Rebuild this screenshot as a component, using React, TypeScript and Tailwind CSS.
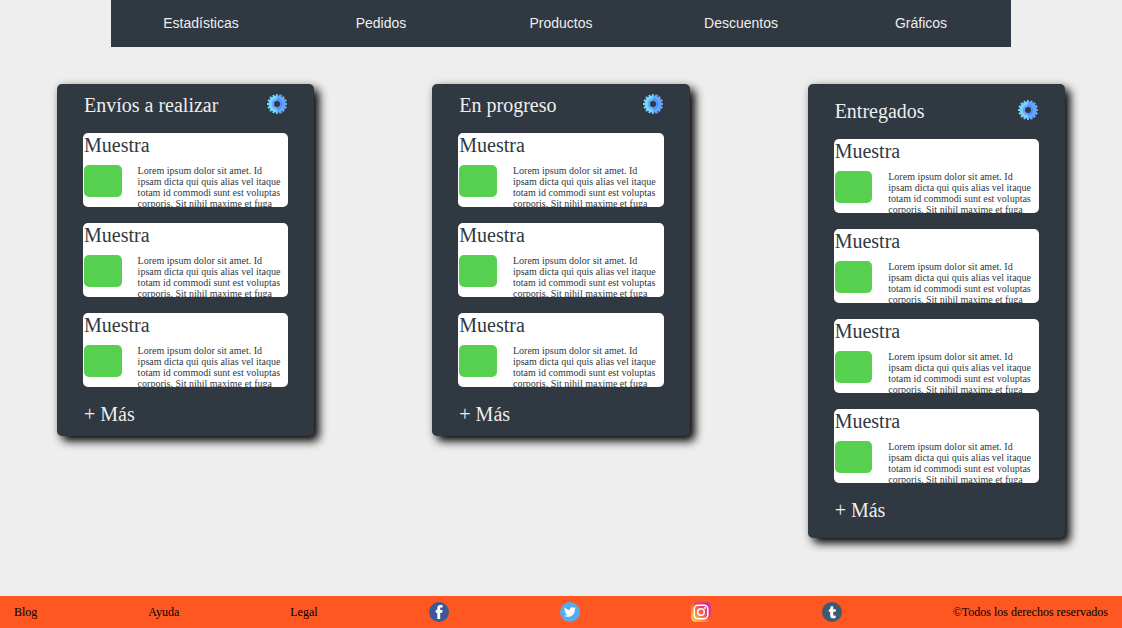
import React from "react";
import { FaTwitter } from "react-icons/fa";

const navItems = ["Estadísticas", "Pedidos", "Productos", "Descuentos", "Gráficos"];

const boards = [
  { title: "Envíos a realizar", samples: 3, roomy: false },
  { title: "En progreso", samples: 3, roomy: false },
  { title: "Entregados", samples: 4, roomy: true },
];

const TEETH = 16;

function gearPath() {
  const points: string[] = [];
  const step = (Math.PI * 2) / TEETH;
  const corners: [number, number][] = [
    [-0.32, 8.4],
    [-0.25, 10],
    [0.25, 10],
    [0.32, 8.4],
  ];
  for (let i = 0; i < TEETH; i++) {
    for (const [offset, radius] of corners) {
      const angle = (i + offset) * step - Math.PI / 2;
      points.push(
        `${(10 + Math.cos(angle) * radius).toFixed(2)} ${(10 + Math.sin(angle) * radius).toFixed(2)}`
      );
    }
  }
  return `M${points.join("L")}Z`;
}

const GEAR = gearPath();

function GearIcon() {
  return (
    <svg viewBox="0 0 20 20" className="size-5" aria-hidden="true">
      <path d={GEAR} fill="#76d3fb" />
      <svg x="10" y="0" width="10" height="20" viewBox="10 0 10 20">
        <path d={GEAR} fill="#66a4ff" />
      </svg>
      <path d="M10 4.6a5.4 5.400 0 0 0 0 10.8z" fill="#66a4ff" />
      <path d="M10 4.6a5.4 5.400 0 0 1 0 10.8z" fill="#4793ff" />
      <circle cx="10" cy="10" r="3" fill="#303841" />
    </svg>
  );
}

function FacebookIcon() {
  return (
    <svg viewBox="0 0 20 20" className="size-5" aria-hidden="true">
      <circle cx="10" cy="10" r="10" fill="#3b5998" />
      <path
        d="M8.300 17V10.700H6.700V8h1.600V6.300c0-2.100 1.100-3.200 3.200-3.200h2v2.500h-1.400c-.7 0-.9.3-.9.9V8h2.300l-.3 2.700h-2V17z"
        fill="#fff"
      />
    </svg>
  );
}

function TumblrIcon() {
  return (
    <svg viewBox="0 0 20 20" className="size-5" aria-hidden="true">
      <circle cx="10" cy="10" r="10" fill="#3e5a70" />
      <path
        d="M8.700 4.200h2.500v3.100h2.500v2.400h-2.500v2.900c0 .8.400 1.200 1.100 1.200.5 0 .9-.1 1.400-.4v2.300c-.7.400-1.500.6-2.500.6-2 0-3-1-3-2.900V9.700H6.700V7.900c1.200-.5 1.900-1.700 2-3.700z"
        fill="#fff"
      />
    </svg>
  );
}

function InstagramIcon() {
  return (
    <svg viewBox="0 0 20 20" className="size-5" aria-hidden="true">
      <defs>
        <linearGradient id="ig" x1="0" y1="1" x2="1" y2="0">
          <stop offset="0" stopColor="#ffd34e" />
          <stop offset="0.3" stopColor="#ff9a3c" />
          <stop offset="0.6" stopColor="#f0425c" />
          <stop offset="1" stopColor="#b232b4" />
        </linearGradient>
      </defs>
      <rect width="20" height="20" rx="4.5" fill="url(#ig)" />
      <rect x="3.2" y="3.2" width="13.6" height="13.6" rx="4" fill="none" stroke="#fff" strokeWidth="1.5" />
      <circle cx="10" cy="10" r="3.3" fill="none" stroke="#fff" strokeWidth="1.5" />
      <circle cx="14" cy="6" r="0.9" fill="#fff" />
    </svg>
  );
}

function Sample() {
  return (
    <article className="h-[74px] overflow-hidden rounded-[5px] bg-white p-px text-[#303841]">
      <h3 className="text-[20px] leading-[23px]">Muestra</h3>
      <div className="mt-2 flex gap-4">
        <div className="h-8 w-[18.5%] shrink-0 rounded-[5px] bg-[#57d04f]" />
        <p className="text-[10px] leading-[11px]">
          Lorem ipsum dolor sit amet. Id ipsam dicta qui quis alias vel itaque totam id commodi sunt est
          voluptas corporis. Sit nihil maxime et fuga
        </p>
      </div>
    </article>
  );
}

function Board({ title, samples, roomy }: { title: string; samples: number; roomy: boolean }) {
  return (
    <section
      className={`flex flex-col gap-4 rounded-[5px] bg-[#303841] px-[26px] text-[20px] leading-[23px] text-[#eeeeee] shadow-[5px_5px_10px_#000000,0_0_10px_#0000001a] ${
        roomy ? "py-4" : "py-[10px]"
      }`}
    >
      <header className="flex h-[23px] items-start justify-between px-px">
        <h2>{title}</h2>
        <button type="button" aria-label={`Configurar ${title}`}>
          <GearIcon />
        </button>
      </header>
      {Array.from({ length: samples }, (_, i) => (
        <Sample key={i} />
      ))}
      <button type="button" className="self-start px-px">
        + Más
      </button>
    </section>
  );
}

export default function App() {
  return (
    <div className="flex min-h-screen flex-col bg-[#eeeeee] font-['Liberation_Serif',serif]">
      <nav className="mx-auto grid w-full max-w-[900px] grid-cols-5 bg-[#303841] text-center font-['Liberation_Sans',sans-serif] text-[14px] leading-[17px] text-[#eeeeee]">
        {navItems.map((item) => (
          <a key={item} href="#" className="py-[15px]">
            {item}
          </a>
        ))}
      </nav>

      <main className="grid flex-1 grid-cols-3 items-start gap-[118px] px-[57px] pt-[37px] pb-[58px]">
        {boards.map((board) => (
          <Board key={board.title} {...board} />
        ))}
      </main>

      <footer className="flex h-8 items-center justify-between bg-[#ff5722] px-[14px] text-[12px] text-black">
        <a href="#">Blog</a>
        <a href="#">Ayuda</a>
        <a href="#">Legal</a>
        <a href="#" aria-label="Facebook">
          <FacebookIcon />
        </a>
        <a
          href="#"
          aria-label="Twitter"
          className="flex size-5 items-center justify-center rounded-full bg-[#55acee] text-white"
        >
          <FaTwitter className="size-3" />
        </a>
        <a href="#" aria-label="Instagram">
          <InstagramIcon />
        </a>
        <a href="#" aria-label="Tumblr">
          <TumblrIcon />
        </a>
        <p>©Todos los derechos reservados</p>
      </footer>
    </div>
  );
}
